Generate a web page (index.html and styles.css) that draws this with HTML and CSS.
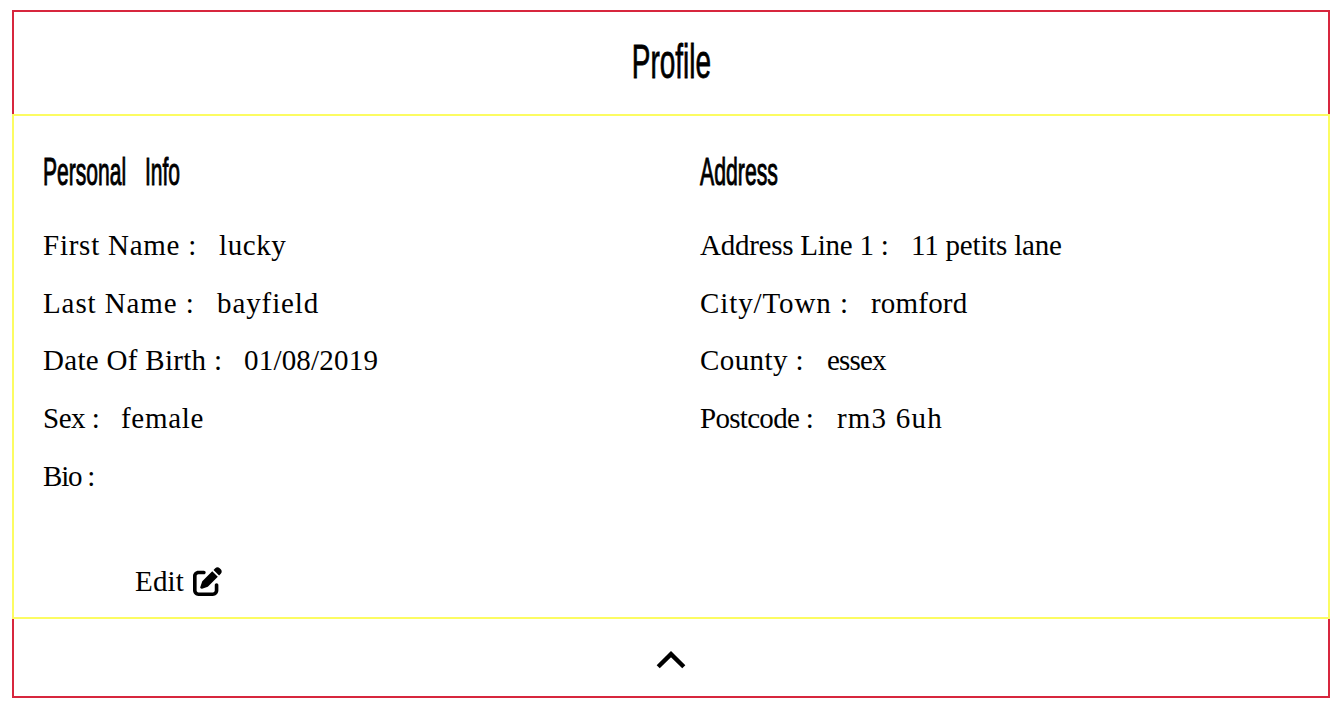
FILE: index.html
```html
<!DOCTYPE html>
<html lang="en">
<head>
<meta charset="utf-8">
<title>Profile</title>
<link rel="stylesheet" href="styles.css">
</head>
<body>
<main class="profile">
  <header class="profile-header"><h1 class="title">Profile</h1></header>
  <div class="details">
    <section class="column">
      <h2 class="heading personal">Personal Info</h2>
      <div class="row first-name"><span class="label">First Name :</span><span class="value">lucky</span></div>
      <div class="row last-name"><span class="label">Last Name :</span><span class="value">bayfield</span></div>
      <div class="row birth"><span class="label">Date Of Birth :</span><span class="value">01/08/2019</span></div>
      <div class="row sex"><span class="label">Sex :</span><span class="value">female</span></div>
      <div class="row bio"><span class="label">Bio :</span></div>
      <a class="edit">Edit
        <svg class="edit-icon" viewBox="0 0 512 512"><path d="M471.6 21.7c-21.9-21.9-57.3-21.9-79.2 0L362.3 51.7l97.9 97.9 30.1-30.1c21.9-21.9 21.9-57.3 0-79.2L471.6 21.7zm-299.2 220c-6.1 6.1-10.8 13.6-13.5 21.9l-29.6 88.8c-2.9 8.6-.6 18.1 5.8 24.6s15.9 8.7 24.6 5.8l88.8-29.6c8.2-2.7 15.7-7.4 21.9-13.5L437.7 172.3 339.7 74.3 172.4 241.7zM96 64C43 64 0 107 0 160V416c0 53 43 96 96 96H352c53 0 96-43 96-96V320c0-17.7-14.3-32-32-32s-32 14.3-32 32v96c0 17.7-14.3 32-32 32H96c-17.7 0-32-14.3-32-32V160c0-17.7 14.3-32 32-32h96c17.7 0 32-14.3 32-32s-14.3-32-32-32H96z"/></svg>
      </a>
    </section>
    <section class="column">
      <h2 class="heading address">Address</h2>
      <div class="row line-one"><span class="label">Address Line 1 :</span><span class="value">11 petits lane</span></div>
      <div class="row town"><span class="label">City/Town :</span><span class="value">romford</span></div>
      <div class="row county"><span class="label">County :</span><span class="value">essex</span></div>
      <div class="row postcode"><span class="label">Postcode :</span><span class="value">rm3 6uh</span></div>
    </section>
  </div>
  <footer class="profile-footer">
    <svg class="chevron" viewBox="0 0 30 18"><path d="M2.2 15.8 15 3.2l12.8 12.6" fill="none" stroke="#000" stroke-width="4.4"/></svg>
  </footer>
</main>
</body>
</html>
```
FILE: styles.css
```css
* { box-sizing: border-box; }
body {
  margin: 10px 12px 0;
  background: #fff;
  color: #000;
  font-family: "Liberation Serif", serif;
  font-size: 29px;
}
.profile { height: 688px; display: flex; flex-direction: column; }
.profile-header {
  height: 104px;
  border: 2px solid #d7263d;
  border-bottom: 0;
  display: flex;
  justify-content: center;
}
.title, .heading {
  margin: 0;
  font-family: "Liberation Sans", sans-serif;
  font-weight: 400;
  white-space: nowrap;
}
.title {
  font-size: 49px;
  line-height: 60px;
  padding-top: 19px;
  transform: scaleX(.57);
  -webkit-text-stroke: .8px #000;
}
.details {
  height: 505px;
  border: 2px solid #fcfc62;
  padding: 0 0 0 29px;
  display: grid;
  grid-template-columns: 657px 1fr;
}
.heading {
  font-size: 39px;
  line-height: 44px;
  padding-top: 34px;
  height: 101px;
  transform-origin: left;
  -webkit-text-stroke: 1px #000;
}
.personal { transform: scaleX(.54); word-spacing: 24px; }
.address { transform: scaleX(.545); }
.row {
  height: 57.7px;
  line-height: 57.7px;
  display: flex;
  white-space: pre;
}
.label { flex: none; }
.first-name .label { width: 176px; letter-spacing: .75px; }
.first-name .value { letter-spacing: .6px; }
.last-name .label { width: 174px; letter-spacing: .9px; }
.last-name .value { letter-spacing: .9px; }
.birth .label { width: 201px; letter-spacing: .3px; }
.birth .value { letter-spacing: .2px; }
.sex .label { width: 78px; letter-spacing: -.5px; }
.sex .value { letter-spacing: .7px; }
.bio .label { letter-spacing: -1.2px; }
.line-one .label { width: 211px; letter-spacing: -.25px; }
.line-one .value { letter-spacing: -.2px; }
.town .label { width: 171px; letter-spacing: .9px; }
.town .value { letter-spacing: .2px; }
.county .label { width: 127px; letter-spacing: .4px; }
.county .value { letter-spacing: -.8px; }
.postcode .label { width: 137px; letter-spacing: -.7px; }
.postcode .value { letter-spacing: 1.2px; }
.edit {
  display: flex;
  align-items: center;
  gap: 9px;
  margin: 61px 0 0 92px;
  height: 30px;
  letter-spacing: .2px;
}
.edit-icon { width: 29px; height: 29px; }
.profile-footer {
  height: 79px;
  border: 2px solid #d7263d;
  border-top: 0;
  display: flex;
  justify-content: center;
  padding-top: 32px;
}
.chevron { width: 30px; height: 18px; }
```
